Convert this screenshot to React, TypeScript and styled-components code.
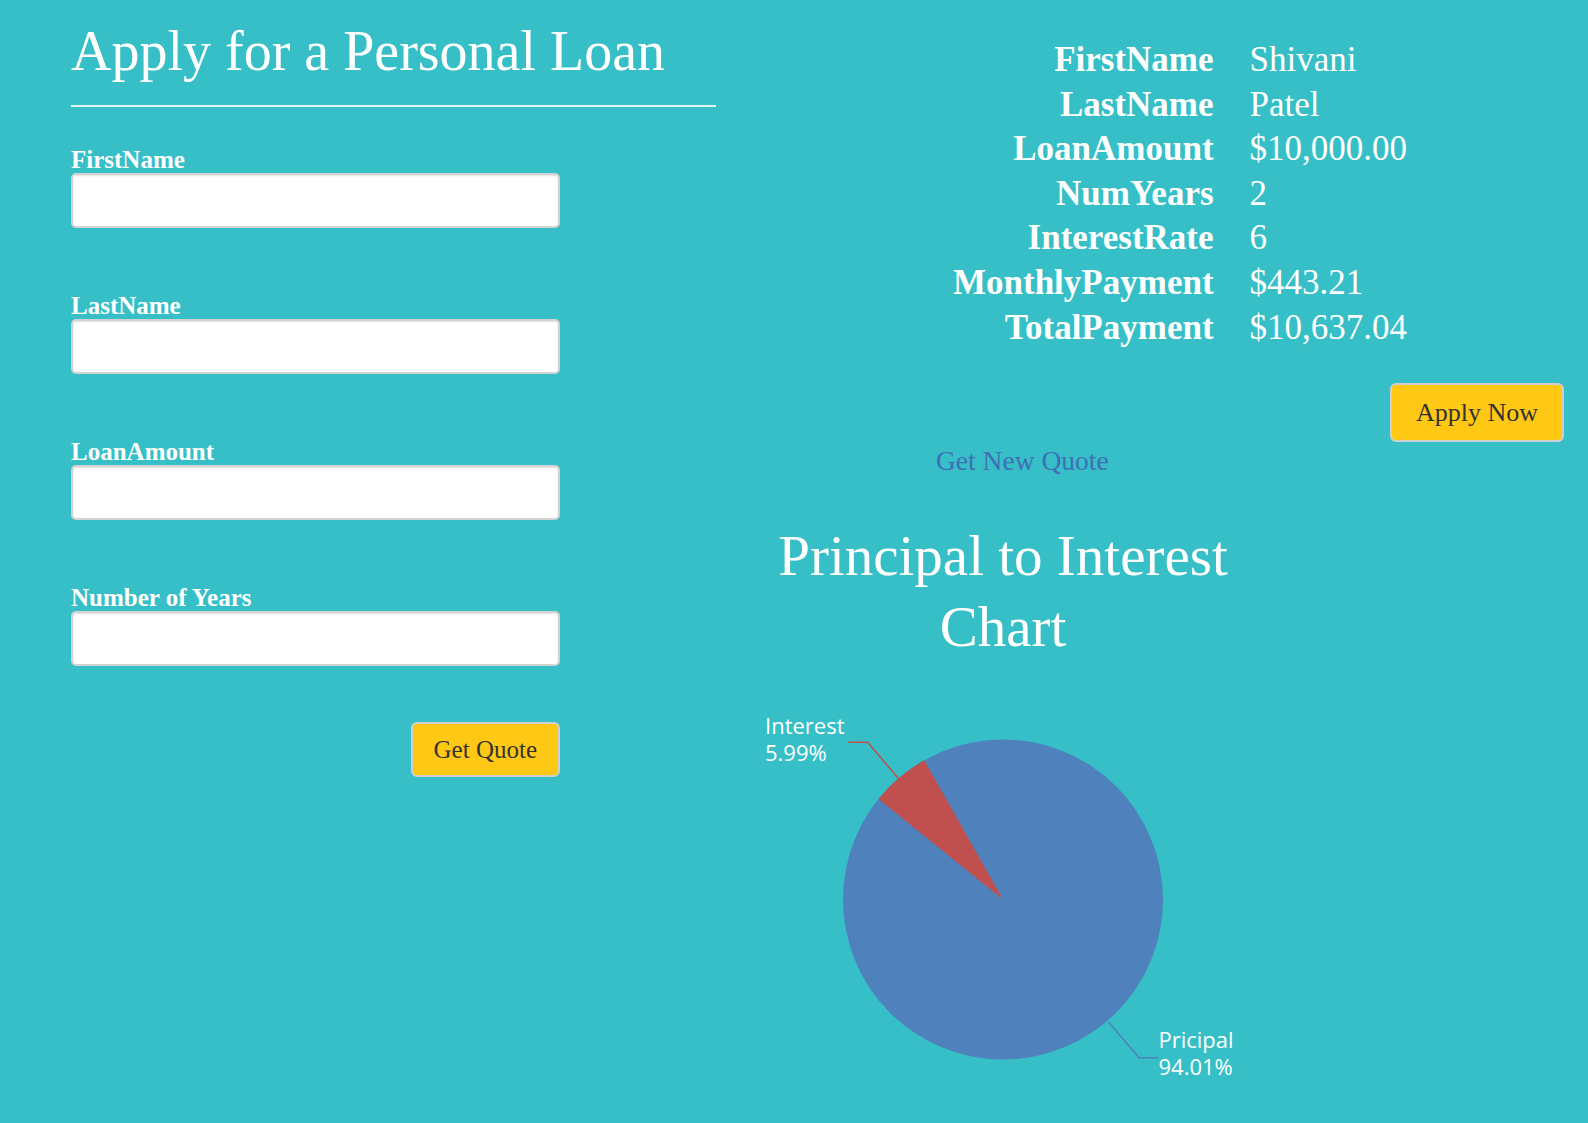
import React from "react";
import styled, { createGlobalStyle } from "styled-components";

const GlobalStyle = createGlobalStyle`
  html, body {
    margin: 0;
    padding: 0;
    background: #36bfc6;
  }
  * { box-sizing: border-box; }
`;

const Page = styled.div`
  display: grid;
  grid-template-columns: 645px 1fr;
  padding-left: 71px;
  min-height: 1123px;
  background: #36bfc6;
  font-family: "Liberation Serif", "Times New Roman", serif;
  color: #ffffff;
`;

const LeftColumn = styled.div`
  display: flex;
  flex-direction: column;
`;

const Title = styled.h1`
  margin: 20px 0 0;
  font-size: 56px;
  line-height: 62px;
  font-weight: normal;
  white-space: nowrap;
`;

const Rule = styled.div`
  margin-top: 23px;
  height: 2px;
  background: rgba(255, 255, 255, 0.85);
`;

const Form = styled.form`
  display: flex;
  flex-direction: column;
  gap: 65px;
  width: 489px;
  margin-top: 40px;
`;

const Field = styled.div`
  display: flex;
  flex-direction: column;
`;

const Label = styled.label`
  font-size: 25px;
  line-height: 26px;
  font-weight: bold;
  color: #ffffff;
`;

const Input = styled.input`
  height: 55px;
  width: 100%;
  border: 2px solid #d2d2d2;
  border-radius: 5px;
  background: #ffffff;
  box-shadow: inset 0 1px 2px rgba(0, 0, 0, 0.12);
  font-family: inherit;
  font-size: 20px;
  padding: 0 12px;
`;

const ButtonRow = styled.div`
  display: flex;
  justify-content: flex-end;
  margin-top: -9px;
`;

const YellowButton = styled.button<{ $h: number; $fs: number; $px: number }>`
  height: ${(p) => p.$h}px;
  padding: 0 ${(p) => p.$px}px;
  background: #ffc814;
  border: 2px solid #cfcfcf;
  border-radius: 6px;
  font-family: "Liberation Serif", "Times New Roman", serif;
  font-size: ${(p) => p.$fs}px;
  color: #333333;
  cursor: pointer;
`;

const RightColumn = styled.div`
  display: flex;
  flex-direction: column;
`;

const Summary = styled.dl`
  display: grid;
  grid-template-columns: auto auto;
  justify-content: start;
  column-gap: 36px;
  margin: 38px 0 0 237px;
  font-size: 35px;
  line-height: 44.6px;
`;

const Term = styled.dt`
  font-weight: bold;
  text-align: right;
  margin: 0;
`;

const Value = styled.dd`
  margin: 0;
`;

const ApplyRow = styled.div`
  display: flex;
  justify-content: flex-end;
  margin: 33px 24px 0 0;
`;

const NewQuoteLink = styled.a`
  margin: 4px 0 0 220px;
  align-self: flex-start;
  font-size: 27.5px;
  line-height: 30px;
  color: #3f6fb6;
  text-decoration: none;
`;

const ChartSection = styled.section`
  width: 526px;
  margin: 44px 0 0 24px;
  display: flex;
  flex-direction: column;
  align-items: center;
`;

const ChartTitle = styled.h2`
  margin: 0;
  font-size: 57px;
  line-height: 71px;
  font-weight: normal;
  text-align: center;
`;

const PieSvg = styled.svg`
  display: block;
  margin-top: 28px;
  font-family: "Open Sans", "DejaVu Sans", sans-serif;
`;

const rows: [string, string][] = [
  ["FirstName", "Shivani"],
  ["LastName", "Patel"],
  ["LoanAmount", "$10,000.00"],
  ["NumYears", "2"],
  ["InterestRate", "6"],
  ["MonthlyPayment", "$443.21"],
  ["TotalPayment", "$10,637.04"],
];

const fields = ["FirstName", "LastName", "LoanAmount", "Number of Years"];

function PieChart() {
  const cx = 263;
  const cy = 209.5;
  const r = 160;
  const pt = (deg: number) => {
    const a = (deg * Math.PI) / 180;
    return [cx + r * Math.sin(a), cy - r * Math.cos(a)];
  };
  const start = 330.5;
  const end = start - 0.0599 * 360;
  const [x1, y1] = pt(start);
  const [x2, y2] = pt(end);
  return (
    <PieSvg width={526} height={410} viewBox="0 0 526 410">
      <circle cx={cx} cy={cy} r={r} fill="#4f81bd" />
      <path
        d={`M ${cx} ${cy} L ${x1} ${y1} A ${r} ${r} 0 0 0 ${x2} ${y2} Z`}
        fill="#c0504d"
      />
      <polyline
        points="108.3,52.3 127.7,52.3 158.3,88.3"
        fill="none"
        stroke="#c0504d"
        strokeWidth={1.5}
      />
      <polyline
        points="368.3,331.7 399,367.7 418.3,367.7"
        fill="none"
        stroke="#4f81bd"
        strokeWidth={1.5}
      />
      <text x={25} y={44} fill="#ffffff" fontSize={22}>
        <tspan x={25} y={44}>Interest</tspan>
        <tspan x={25} y={70.7}>5.99%</tspan>
      </text>
      <text x={418.5} y={358.3} fill="#ffffff" fontSize={22}>
        <tspan x={418.5} y={358.3}>Pricipal</tspan>
        <tspan x={418.5} y={385}>94.01%</tspan>
      </text>
    </PieSvg>
  );
}

export default function App() {
  return (
    <>
      <GlobalStyle />
      <Page>
        <LeftColumn>
          <Title>Apply for a Personal Loan</Title>
          <Rule />
          <Form onSubmit={(e) => e.preventDefault()}>
            {fields.map((f) => (
              <Field key={f}>
                <Label>{f}</Label>
                <Input type="text" />
              </Field>
            ))}
            <ButtonRow>
              <YellowButton type="submit" $h={55} $fs={25} $px={21}>
                Get Quote
              </YellowButton>
            </ButtonRow>
          </Form>
        </LeftColumn>
        <RightColumn>
          <Summary>
            {rows.map(([k, v]) => (
              <React.Fragment key={k}>
                <Term>{k}</Term>
                <Value>{v}</Value>
              </React.Fragment>
            ))}
          </Summary>
          <ApplyRow>
            <YellowButton type="button" $h={59} $fs={26} $px={24}>
              Apply Now
            </YellowButton>
          </ApplyRow>
          <NewQuoteLink href="#">Get New Quote</NewQuoteLink>
          <ChartSection>
            <ChartTitle>Principal to Interest Chart</ChartTitle>
            <PieChart />
          </ChartSection>
        </RightColumn>
      </Page>
    </>
  );
}
